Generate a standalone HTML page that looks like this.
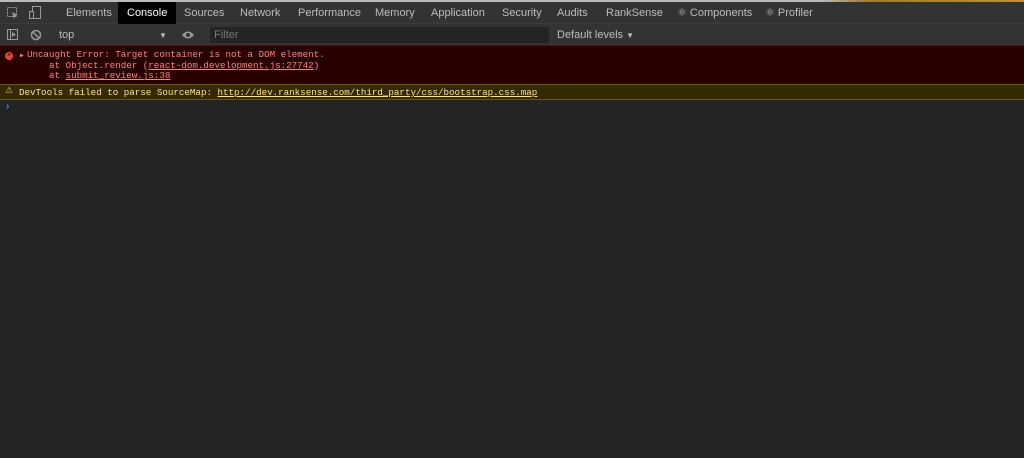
<!DOCTYPE html>
<html><head><style>
body{margin:0;width:1024px;height:458px;background:#242424;overflow:hidden;font-family:"Liberation Sans",sans-serif;position:relative}
.top{position:absolute;left:0;top:0;width:1024px;height:2px;background:linear-gradient(90deg,#bbb 0,#bbb 80%,#a07a30 85%,#c09040 100%)}
.tabs{position:absolute;top:2px;left:0;width:1024px;height:22px;background:#333;border-bottom:1px solid #3d3d3d;box-sizing:border-box}
.tabs span{position:absolute;top:0;height:22px;line-height:22px;font-size:11px;color:#bdbdbd}
.tabs .act{background:#000;color:#fff;padding:0 9px}
.tb{position:absolute;top:24px;left:0;width:1024px;height:22px;background:#333;border-bottom:1px solid #4a1515;box-sizing:border-box}
.tb span{position:absolute;font-size:11px;color:#bdbdbd;top:5px}
.mono{font-family:"Liberation Mono",monospace;font-size:9.2px}
.err{position:absolute;top:46px;left:0;width:1024px;height:38px;background:#290000;color:#f4877f}
.warn{position:absolute;top:84px;left:0;width:1024px;height:16px;background:#332a00;border-top:1px solid #66561a;border-bottom:1px solid #66561a;box-sizing:border-box;color:#fde38a}
u{text-decoration:underline}
</style></head><body>
<div class="top"></div>
<div class="tabs">
<svg style="position:absolute;left:7px;top:5px" width="12" height="12"><rect x="0.5" y="0.5" width="9" height="9" fill="none" stroke="#999" stroke-dasharray="2 1"/><path d="M5 5l6 3-3 1-1 3z" fill="#999"/></svg>
<svg style="position:absolute;left:29px;top:4px" width="12" height="14"><rect x="3.5" y="0.5" width="8" height="12" fill="none" stroke="#999"/><rect x="0.5" y="5.5" width="4" height="7" fill="#333" stroke="#999"/></svg>
<span style="left:66px">Elements</span>
<span class="act" style="left:118px">Console</span>
<span style="left:184px">Sources</span>
<span style="left:240px">Network</span>
<span style="left:298px">Performance</span>
<span style="left:375px">Memory</span>
<span style="left:431px">Application</span>
<span style="left:502px">Security</span>
<span style="left:557px">Audits</span>
<span style="left:606px">RankSense</span>
<span style="left:677px">⚛ Components</span>
<span style="left:765px">⚛ Profiler</span>
</div>
<div class="tb">
<svg style="position:absolute;left:7px;top:5px" width="12" height="12"><rect x="0.5" y="0.5" width="10" height="10" fill="none" stroke="#999"/><line x1="3.5" y1="1" x2="3.5" y2="10" stroke="#999"/><path d="M5 3l4 2.5-4 2.5z" fill="#999"/></svg>
<svg style="position:absolute;left:30px;top:5px" width="12" height="12"><circle cx="6" cy="6" r="4.5" fill="none" stroke="#999" stroke-width="1.5"/><line x1="3" y1="3" x2="9" y2="9" stroke="#999" stroke-width="1.5"/></svg>
<span style="left:59px">top</span>
<span style="left:159px;font-size:8px;top:7px">▼</span>
<svg style="position:absolute;left:181px;top:6px" width="14" height="10"><path d="M1 5Q7 -2 13 5Q7 12 1 5z" fill="#999"/><circle cx="7" cy="5" r="2" fill="#333"/></svg>
<div style="position:absolute;left:210px;top:3px;width:339px;height:16px;background:#242424"></div>
<span style="left:214px;color:#777">Filter</span>
<span style="left:557px">Default levels <span style="position:static;font-size:8px">▼</span></span>
</div>
<div class="err mono">
<div style="position:absolute;left:5px;top:6px;width:8px;height:8px;border-radius:50%;background:#e6453a;color:#290000;font-size:7px;line-height:8px;text-align:center;font-family:'Liberation Sans'">×</div>
<div style="position:absolute;left:20px;top:6px;font-size:6px">▶</div>
<div style="position:absolute;left:27px;top:4px;line-height:10.7px;white-space:pre">Uncaught Error: Target container is not a DOM element.
    at Object.render (<u>react-dom.development.js:27742</u>)
    at <u>submit_review.js:38</u></div>
</div>
<div class="warn mono">
<div style="position:absolute;left:5px;top:1px;font-size:9px;color:#f5c518;font-family:'DejaVu Sans'">⚠</div>
<div style="position:absolute;left:19px;top:2px;white-space:pre">DevTools failed to parse SourceMap: <u>http://dev.ranksense.com/third_party/css/bootstrap.css.map</u></div>
</div>
<div style="position:absolute;left:6px;top:101px;color:#4d8ef0;font-size:10px;font-weight:bold">›</div>
</body></html>
